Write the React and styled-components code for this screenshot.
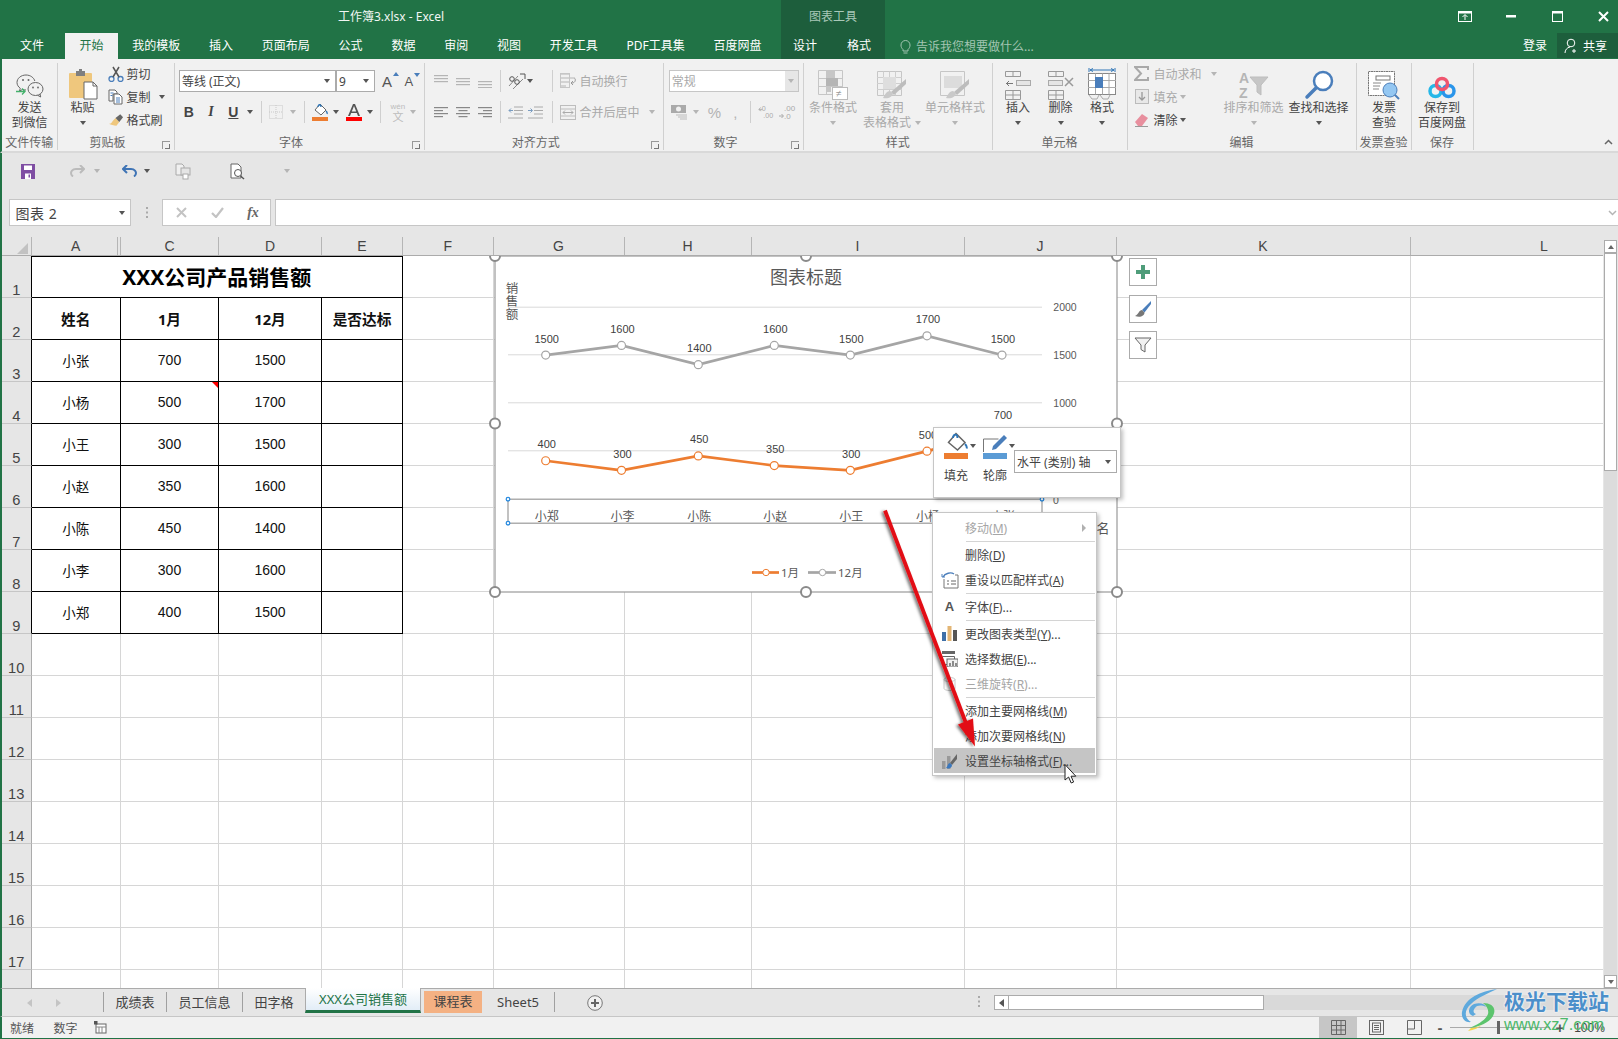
import React from 'react';
import styled, { createGlobalStyle } from 'styled-components';

const Global = createGlobalStyle`
  html, body { margin: 0; padding: 0; background: #fff; }
  body { font-family: "Noto Sans", "Noto Sans CJK SC", sans-serif; font-size: 12px; color: #444; }
  * { box-sizing: border-box; }
`;

const Win = styled.div`position: relative; width: 1618px; height: 1039px; overflow: hidden; display: flex; flex-direction: column; background: #e6e6e6;`;
const TitleBar = styled.div`height: 33px; background: #217346; display: flex; align-items: center; color: #f1f6f3; position: relative; flex: none;`;
const TitleText = styled.div`margin-left: 338px; width: 443px; line-height: 33px; font-size: 12px;`;
const ToolsHead = styled.div`width: 104px; height: 33px; background: #1d5e3c; color: #a9c8b8; text-align: center; line-height: 33px;`;
const WinCtrls = styled.div`margin-left: auto; margin-right: -8px; display: flex; align-items: center; svg { display:block; }`;
const WinBtn = styled.div`width: ${p => p.$w}px; display: flex; justify-content: center;`;

const TabBar = styled.div`height: 26px; background: #217346; display: flex; align-items: stretch; padding-left: 6px; color: #fff; flex: none;`;
const Tab = styled.div`padding: 0 14.4px; line-height: 26px; white-space: nowrap; flex: none; ${p => p.$on ? 'background:#f1f1f1;color:#217346;' : ''}`;
const FileTab = styled(Tab)`padding: 0 21px 0 14px;`;
const ToolsTabs = styled.div`background: #1d5e3c; display: flex; width: 104px; padding-left: 12px; margin-left: 5px; flex: none;`;
const ToolTab = styled.div`width: 38px; line-height: 26px; flex: none; &:first-child { width: 54px; }`;
const Tell = styled.div`display: flex; align-items: center; margin-left: 15px; color: #a3c5b2; gap: 5px; white-space: nowrap;`;
const Login = styled.div`margin-left: auto; line-height: 26px; width: 34px; `;
const Share = styled.div`width: 61px; height: 25px; background: #1d5e3c; display: flex; align-items: center; gap: 5px; padding-left: 7px;`;

const Ribbon = styled.div`height: 94px; background: #f1f1f1; border-bottom: 2px solid #d9d9d9; display: flex; padding-top: 4px; border-left: 2px solid #217346; flex: none;`;
const Group = styled.div`width: ${p => p.$w}px; height: 87px; border-right: 1px solid #d0d0d0; display: flex; flex-direction: column; position: relative; flex: none;`;
const GroupBody = styled.div`height: 72px; display: flex; padding-left: ${p => p.$pl || 0}px; margin-bottom: 1.500px;`;
const GroupLabel = styled.div`height: 15px; line-height: 15px; text-align: center; color: #666; padding-right: ${p => p.$launch ? 16 : 0}px; white-space: nowrap;`;
const Launcher = styled.div`position: absolute; right: 4px; bottom: 1px; width: 8px; height: 8px; border-left: 1px solid #999; border-top: 1px solid #999;
  &::after { content: ''; position: absolute; right: 0; bottom: 0; width: 4px; height: 4px; border-right: 1px solid #777; border-bottom: 1px solid #777; }`;
const Large = styled.div`width: ${p => p.$w}px; display: flex; flex-direction: column; align-items: center; color: ${p => p.$off ? '#a9a9a9' : '#444'}; flex: none; margin-left: ${p => p.$ml || 0}px;`;
const LargeIcon = styled.div`height: 35px; margin-top: 2px; display: flex; align-items: flex-end; justify-content: center; flex: none;`;
const LargeLine = styled.div`height: 15px; line-height: 15px; white-space: nowrap; display: flex; align-items: center; gap: 4px; justify-content: center;`;
const Caret = styled.i`display: inline-block; width: 0; height: 0; border-left: 3.5px solid transparent; border-right: 3.5px solid transparent; border-top: 4px solid ${p => p.$off ? '#b5b5b5' : '#555'}; flex: none;`;
const Stack = styled.div`display: flex; flex-direction: column; margin-top: -1px; width: ${p => p.$w}px; flex: none;`;
const SmallRow = styled.div`height: 23px; display: flex; align-items: center; color: ${p => p.$off ? '#a9a9a9' : '#444'}; white-space: nowrap;`;
const Rows = styled.div`padding-top: 7px; display: flex; flex-direction: column; gap: 9px; flex: none;`;
const Row = styled.div`height: 22px; display: flex; align-items: center; color: ${p => p.$off ? '#a9a9a9' : '#444'}; white-space: nowrap;`;
const Slot = styled.div`width: ${p => p.$w}px; margin-left: ${p => p.$ml || 0}px; display: flex; align-items: center; justify-content: center; flex: none; svg { display: block; }`;
const Sep = styled.div`width: 8px; height: 22px; flex: none; display:flex; justify-content:center; &::after { content: ''; width: 1px; background: #cfcfcf; }`;
const Combo = styled.div`width: ${p => p.$w}px; height: 22px; background: #fff; border: 1px solid ${p => p.$off ? '#c6c6c6' : '#ababab'}; display: flex; align-items: center; padding-left: 2px; color: ${p => p.$off ? '#a9a9a9' : '#444'}; position: relative; flex: none; justify-content: space-between;`;
const ComboArrow = styled.div`width: ${p => p.$w || 15}px; align-self: stretch; display: flex; align-items: center; justify-content: center; background: ${p => p.$bg || 'transparent'};`;
const Bold = styled.b`font-family: "Liberation Sans", sans-serif; font-size: 14px; color: #444;`;
const Ital = styled.i`font-family: "Liberation Serif", serif; font-size: 14px; font-weight: 700; color: #444;`;
const Under = styled.span`font-family: "Liberation Sans", sans-serif; font-size: 14px; font-weight: 700; text-decoration: underline; color: #444;`;
const BigA = styled.span`font-family: "Liberation Sans", sans-serif; font-size: ${p => p.$s}px; color: #555; position: relative; line-height: 1;`;
const Tri = styled.i`position: absolute; right: -7px; top: -2px; border-left: 3px solid transparent; border-right: 3px solid transparent; ${p => p.$up ? 'border-bottom: 4px solid #4a7ebb;' : 'border-top: 4px solid #4a7ebb;'}`;
const Wen = styled.div`display: flex; flex-direction: column; align-items: center; line-height: 9px; color: #bcbcbc; font-size: 8px; font-family: "Liberation Sans", sans-serif; span { font-size: 11px; line-height: 11px; font-family: "Noto Sans CJK SC", sans-serif; }`;
const Pct = styled.span`font-family: "Liberation Sans", sans-serif; font-size: 15px; color: #b3b3b3;`;
const Collapse = styled.div`margin-left: auto; align-self: flex-end; padding: 0 5px 2px 0;`;

const Qat = styled.div`height: 46px; background: #e6e6e6; display: flex; align-items: center; padding-left: 16px; padding-bottom: 10px; border-left: 2px solid #217346; flex: none;`;
const FormulaRow = styled.div`height: 27px; display: flex; background: #e6e6e6; border-left: 2px solid #217346; padding-left: 6.5px; align-items: stretch; flex: none;`;
const NameBox = styled.div`width: 122.5px; background: #fff; border: 1px solid #c6c6c6; display: flex; align-items: center; justify-content: space-between; padding-left: 6px; font-size: 14px; color: #444; letter-spacing: .5px;`;
const Dots = styled.div`width: 31px; display: flex; justify-content: center; align-items: center;`;
const FxBox = styled.div`width: 109px; background: #fff; border: 1px solid #c6c6c6; display: flex; align-items: center;`;
const FormulaInput = styled.div`flex: 1; margin-left: 4px; background: #fff; border: 1px solid #c6c6c6; border-right: 0; display: flex; align-items: center; justify-content: flex-end; padding-right: 1px;`;
const Fx = styled.i`font-family: "Liberation Serif", serif; font-size: 14px; color: #666; font-weight: 700;`;
const Gap = styled.div`height: 11px; background: #e6e6e6; border-left: 2px solid #217346; flex: none;`;

const SheetWrap = styled.div`height: 751px; display: flex; border-left: 2px solid #217346; background: #e6e6e6; flex: none;`;
const SheetCol = styled.div`width: 1601px; display: flex; flex-direction: column; position: relative; overflow: hidden;`;
const COLS = '29.5px 89.5px 98px 103px 81px 90.5px 131px 127px 213px 152px 294px 268px';
const HeadRow = styled.div`height: 18.5px; display: grid; grid-template-columns: ${COLS}; background: #e6e6e6; border-bottom: 1px solid #ababab; flex: none;`;
const HeadCell = styled.div`text-align: center; font-family: "Liberation Sans", sans-serif; font-size: 14px; line-height: 18px; color: #444; border-right: 1px solid #b5b5b5; position: relative;
  ${p => p.$double ? `&::after { content: ''; position: absolute; right: 2px; top: 0; bottom: 0; width: 1px; background: #b5b5b5; }` : ''}`;
const Corner = styled.div`position: relative; border-right: 1px solid #b5b5b5; &::after { content: ''; position: absolute; right: 3px; bottom: 1px; width: 0; height: 0; border-left: 11px solid transparent; border-bottom: 11px solid #c2c2c2; }`;
const Body = styled.div`flex: 1; position: relative; overflow: hidden; background: #fff;`;
const Grid = styled.div`display: grid; grid-template-columns: ${COLS}; grid-auto-rows: 42px;`;
const RowNo = styled.div`background: #e6e6e6; border-right: 1px solid ${p => p.$dark ? '#000' : '#ababab'}; border-bottom: 1px solid #c6c6c6; font-family: "Liberation Sans", sans-serif; font-size: 14.67px; color: #444; display: flex; align-items: flex-end; justify-content: center; line-height: 13px;`;
const Cell = styled.div`position: relative; border-right: 1px solid ${p => p.$box ? '#000' : '#d6d6d6'}; border-bottom: 1px solid ${p => p.$box ? '#000' : '#d6d6d6'}; display: flex; align-items: center; justify-content: center; color: #111; font-size: ${p => p.$bold ? '14.67px' : '13.5px'}; font-weight: ${p => p.$bold ? 700 : 400}; font-family: ${p => p.$num ? '"Liberation Sans",' : ''} "Noto Sans", "Noto Sans CJK SC", sans-serif; white-space: nowrap;
  ${p => p.$num ? 'font-size: 14px;' : ''}
  ${p => p.$note ? `&::after { content: ''; position: absolute; right: 0; top: 0; border-top: 6px solid #f00; border-left: 6px solid transparent; }` : ''}`;
const TitleCell = styled(Cell)`grid-column: span 4; font-size: 21px; font-weight: 700; color: #000; box-shadow: inset 0 1px 0 #000;`;

const ChartSvg = styled.svg`position: absolute; left: 483px; top: -10px; font-family: "Noto Sans", "Noto Sans CJK SC", sans-serif;`;
const ChartBtns = styled.div`position: absolute; left: 1127px; top: 2.500px; display: flex; flex-direction: column; gap: 8.500px;`;
const ChartBtn = styled.div`width: 28px; height: 28px; background: #fff; border: 1px solid #ababab; display: flex; align-items: center; justify-content: center;`;

const Mini = styled.div`position: absolute; left: 931px; top: 171.5px; width: 188px; height: 71px; background: #fff; border: 1px solid #c6c6c6; box-shadow: 2px 2px 4px rgba(0,0,0,.25); display: flex; padding: 4px 0 0 10px; z-index: 3;`;
const MiniTool = styled.div`width: ${p => p.$w}px; display: flex; flex-direction: column; flex: none; `;
const MiniHead = styled.div`display: flex; align-items: flex-start; i { margin-top: 12px; margin-left: 2px; }`;
const MiniLabel = styled.div`margin-top: 7px; width: 24px; text-align: center; white-space: nowrap; color: #444;`;
const MiniCombo = styled.div`margin-top: 18px; width: 103px; height: 23px; margin-left: -1px; border: 1px solid #ababab; display: flex; align-items: center; justify-content: space-between; padding: 0 5px 0 2px; color: #444; white-space: nowrap;`;

const Menu = styled.div`position: absolute; left: 930px; top: 256.5px; width: 165px; background: #fff; border: 1px solid #c6c6c6; box-shadow: 2px 2px 4px rgba(0,0,0,.25); padding: 2px 1px; z-index: 3;`;
const MenuRow = styled.div`height: 25px; display: flex; align-items: center; color: ${p => p.$off ? '#a6a6a6' : '#444'}; background: ${p => p.$hot ? '#c5c5c5' : 'transparent'}; white-space: nowrap; position: relative;`;
const MenuIcon = styled.div`width: 31px; flex: none; display: flex; justify-content: center; align-items: center; svg { display: block; } b { font-size: 13px; color: #555; font-family: "Liberation Sans", sans-serif; }`;
const MenuSep = styled.div`height: 2px; margin-left: 32px; display: flex; align-items: center; &::after { content: ''; height: 1px; flex: 1; background: #d4d4d4; }`;
const Sub = styled.i`position: absolute; right: 9px; top: 9px; border-left: 4px solid #b0b0b0; border-top: 4px solid transparent; border-bottom: 4px solid transparent;`;
const OverSvg = styled.svg`position: absolute; left: 0; top: 0; z-index: 4; pointer-events: none;`;

const VScroll = styled.div`width: 15px; background: #e6e6e6; display: flex; flex-direction: column; padding-top: 3px; flex: none; align-items: center;`;
const VBtn = styled.div`width: 13px; height: 13px; background: #fff; border: 1px solid #ababab; display: flex; align-items: center; justify-content: center; flex: none;`;
const VThumb = styled.div`width: 13px; height: 218px; background: #fff; border: 1px solid #ababab; flex: none;`;
const VTrack = styled.div`flex: 1; width: 13px; background: #dcdcdc;`;
const Up = styled.i`border-left: 3.5px solid transparent; border-right: 3.5px solid transparent; border-bottom: 4px solid #666;`;
const Down = styled.i`border-left: 3.5px solid transparent; border-right: 3.5px solid transparent; border-top: 4px solid #666;`;

const TabsRow = styled.div`height: 28px; display: flex; align-items: stretch; border-top: 1px solid #ababab; border-left: 2px solid #217346; background: #e6e6e6; position: relative; flex: none;`;
const SheetTab = styled.div`height: 20px; align-self: flex-start; line-height: 20px; padding: 0 ${p => p.$pad || 11.5}px; border-right: ${p => p.$plain ? 0 : '1px solid #a0a0a0'}; font-size: 13px; color: #444; white-space: nowrap; margin-top: 3px;`;
const ActiveTab = styled.div`margin-top: -1px; height: 25px; width: 116px; text-align: center; line-height: 23px; font-size: 13px; color: #217346; background: linear-gradient(#fff, #e2edf7); border-left: 1px solid #ababab; border-right: 1px solid #ababab; border-bottom: 3px solid #217346; white-space: nowrap; flex: none;`;
const ColorTab = styled.div`margin: 2px 0 0 3px; width: 58px; height: 22px; background: #f4b183; text-align: center; line-height: 21px; font-size: 13px; color: #444; flex: none;`;
const TabArrow = styled.i`align-self: center; margin-left: ${p => p.$ml}px; border-top: 4px solid transparent; border-bottom: 4px solid transparent; ${p => p.$l ? 'border-right: 5px solid #c4c4c4;' : 'border-left: 5px solid #c4c4c4;'}`;
const TabList = styled.div`display: flex; margin-left: ${p => p.$ml}px; border-left: 1px solid #a0a0a0; height: 20px; margin-top: 3px; align-items: flex-start; > * { margin-top: 0; }`;
const PlusSlot = styled(Slot)`align-self: center;`;
const TabDots = styled.div`align-self: center; margin-left: auto; padding-right: 14px;`;
const HScrollBox = styled.div`margin-right: 20px; margin-top: 6px; width: 604px; height: 15px; background: #d9d9d9; display: flex;`;
const HBtn = styled.div`width: 15px; background: #fff; border: 1px solid #ababab; display: flex; align-items: center; justify-content: center;`;
const HThumb = styled.div`width: 255px; background: #fff; border: 1px solid #ababab; border-left: 0;`;

const Status = styled.div`height: 23px; background: #f1f1f1; border-top: 1px solid #c6c6c6; border-left: 2px solid #217346; border-bottom: 1px solid #217346; display: flex; align-items: center; padding-left: 8px; flex: none; color: #555;`;
const StatusText = styled.div`margin-left: ${p => p.$ml || 0}px;`;
const ViewBtn = styled.div`width: 38px; align-self: stretch; display: flex; align-items: center; justify-content: center; background: ${p => p.$on ? '#c6c6c6' : 'transparent'};`;
const StatusRight = styled.div`margin-left: auto; display: flex; align-items: center; align-self: stretch; padding-right: 6px;`;
const Zoomer = styled.div`width: 100px; height: 1px; background: #aaa; margin: 0 3px; position: relative; &::after { content: ''; position: absolute; left: 47px; top: -6px; width: 3px; height: 13px; background: #666; }`;
const ZoomSign = styled.div`width: 14px; text-align: center; color: #555; font-size: 15px; font-weight: 700; font-family: "Liberation Sans", sans-serif;`;
const Pctl = styled.div`width: 45px; text-align: center; font-size: 12px; font-family: "Liberation Sans", sans-serif; color: #444;`;

const Mark = styled.div`position: absolute; left: 1459px; top: 988px; width: 155px; height: 44px; display: flex; pointer-events: none;`;
const MarkText = styled.div`margin-left: 1px; display: flex; flex-direction: column;`;
const MarkName = styled.div`font-size: 21px; line-height: 26px; font-weight: 700; color: #4c8fca; text-shadow: 0 0 2px #fff, 0 0 2px #fff; white-space: nowrap;`;
const MarkUrl = styled.div`font-family: "Liberation Sans", sans-serif; font-size: 16.4px; line-height: 17px; color: #4cb86a; margin-top: 2px; white-space: nowrap;`;

const S = ({ w, h, v, children }) => <svg width={w} height={h} viewBox={v || `0 0 ${w} ${h}`} fill="none">{children}</svg>;

const Lines = ({ rows, c = '#888' }) => (
  <S w={16} h={14}>{rows.map(([x, y, l], i) => <rect key={i} x={x} y={y} width={l} height={1.2} fill={c} />)}</S>
);

const Wechat = () => (
  <S w={28} h={26}>
    <path d="M10 1C5 1 1 4.300 1 8.500c0 2.400 1.300 4.400 3.300 5.800L3.500 17l3-1.500c1 .3 2.200 .5 3.500 .5" stroke="#666" />
    <path d="M10 1c4.500 0 8 2.800 8.800 6" stroke="#666" />
    <ellipse cx="19.500" cy="15" rx="7.500" ry="6.500" fill="#f1f1f1" stroke="#666" />
    <path d="M24 20l.7 3-3-1.700" stroke="#666" />
    <circle cx="7" cy="6" r="1" fill="#666" /><circle cx="12.500" cy="6" r="1" fill="#666" /><circle cx="17" cy="13.500" r=".9" fill="#666" /><circle cx="22" cy="13.500" r=".9" fill="#666" />
    <path d="M0 17.500h9M6 14.500l3 3-3 3" stroke="#43b16b" strokeWidth="1.300" />
  </S>
);
const Paste = () => (
  <S w={30} h={31}>
    <rect x="1" y="4" width="23" height="25" rx="1" fill="#efc77d" />
    <rect x="8" y="2" width="9" height="5" fill="#7f7f7f" /><rect x="11" y="0" width="3" height="4" fill="#7f7f7f" />
    <path d="M16 13h9l4 4v13H16z" fill="#fff" stroke="#666" />
    <path d="M25 13v4h4" stroke="#666" />
  </S>
);
const Scissors = () => (
  <S w={16} h={16}>
    <circle cx="3.500" cy="13" r="2.500" stroke="#4a7ebb" strokeWidth="1.300" /><circle cx="12.500" cy="13" r="2.500" stroke="#4a7ebb" strokeWidth="1.300" />
    <path d="M5 11L11 1M11 11L5 1" stroke="#555" strokeWidth="1.500" />
  </S>
);
const Copy = () => (
  <S w={16} h={16}>
    <path d="M1 1h6l2 2v2H5v7H1z" fill="#fff" stroke="#666" /><path d="M6 5h5l3 3v7H6z" fill="#fff" stroke="#666" />
    <path d="M2.500 4h3M2.500 6.500h2M8 9h4M8 11h4M8 13h4" stroke="#4a7ebb" />
  </S>
);
const Painter = () => (
  <S w={17} h={14}>
    <path d="M8 5l4 4-3 4c-3 0-6-1-8-2 2 0 3-1 4-3z" fill="#efc77d" />
    <path d="M8 5l4 4 4-5-3-3z" fill="#666" />
  </S>
);
const Border = () => (
  <S w={14} h={14}><rect x=".5" y=".5" width="13" height="13" stroke="#c9c9c9" strokeDasharray="1 1" /><path d="M7 0v14M0 7h14" stroke="#c9c9c9" strokeDasharray="1 1" /></S>
);
const Bucket = ({ w = 16, h = 18 }) => (
  <S w={w} h={h} v="0 0 16 18">
    <path d="M8 1l6 6-5 5-6-5z" fill="#fff" stroke="#666" />
    <path d="M6 4c0-3 3-3 3 0M14 8c1 1 1.500 2 1 3" stroke="#2e75b6" strokeWidth="1.300" />
    <rect x="0" y="14" width="16" height="4" fill="#ed7d31" />
  </S>
);
const FontA = () => (
  <S w={16} h={18}><path d="M2 13L7 1h2l5 12h-2l-1.200-3H5.200L4 13zM5.800 8.500h4.400L8 3z" fill="#555" /><rect y="14" width="16" height="4" fill="#f00" /></S>
);
const Orient = () => (
  <S w={20} h={17}><path d="M3 13L12 3M7 16L17 6" stroke="#888" /><path d="M14 1h5v5" stroke="#555" /><circle cx="6" cy="6" r="2.300" stroke="#555" /><circle cx="11" cy="9" r="2.300" stroke="#555" /></S>
);
const Indent = ({ r }) => (
  <S w={16} h={13}><path d="M6 1h9M6 4.500h9M6 8h9M0 12h15" stroke="#aaa" /><path d={r ? 'M0 4.500h4M2.500 2.500l2 2-2 2' : 'M5 4.500H1M3 2.500l-2 2 2 2'} stroke="#7a9cc0" /></S>
);
const Wrap = () => (
  <S w={16} h={16}><path d="M1 1h9M1 5h13M1 9h8M1 13h5" stroke="#b5b5b5" strokeWidth="1.200" /><path d="M14 5c2 0 2 5-2 5M13 8l-2 2 2 2" stroke="#999" /><rect x="0.500" y="0.500" width="9" height="14" stroke="#c6c6c6" /></S>
);
const Merge = () => (
  <S w={16} h={15}><rect x=".5" y=".5" width="15" height="14" stroke="#bdbdbd" /><path d="M0 4h16M0 11h16" stroke="#bdbdbd" /><path d="M3 7.500h10M5 5.500l-2 2 2 2M11 5.500l2 2-2 2" stroke="#aaa" /></S>
);
const Currency = () => (
  <S w={16} h={16}><rect x="0" y="1" width="15" height="8" fill="#aaa" /><circle cx="7.500" cy="5" r="2.500" fill="#f1f1f1" /><path d="M5 11h11M7 13h9M9 15h7" stroke="#bbb" /></S>
);
const Dec = ({ t, b, a }) => (
  <S w={18} h={17}>
    <text x={a ? 6 : 2} y="7" fontSize="8" fill="#aaa" fontFamily="Liberation Sans">{t}</text>
    <text x="6" y="15" fontSize="8" fill="#aaa" fontFamily="Liberation Sans">{b}</text>
    <path d={a ? 'M1 12h4M3.500 10l2 2-2 2' : 'M5 5H1M3 3L1 5l2 2'} stroke="#aaa" />
  </S>
);
const CondFmt = () => (
  <S w={30} h={30}>
    <path d="M.500.500h24v24H.500zM8.500 0v25M16.500 0v25M0 8.500h25M0 16.500h25" stroke="#c6c6c6" />
    <rect x="8" y="1" width="8" height="8" fill="#c6c6c6" /><rect x="8" y="8" width="12" height="8" fill="#b5b5b5" /><rect x="8" y="16" width="5" height="6" fill="#c6c6c6" />
    <rect x="14.500" y="17.500" width="15" height="12" fill="#fff" stroke="#bbb" />
    <text x="18" y="27" fontSize="10" fill="#999" fontFamily="Liberation Sans">≠</text>
  </S>
);
const TableFmt = ({ cell }) => (
  <S w={30} h={30}>
    <path d="M.500 1.500h24v24H.500z" stroke="#c6c6c6" fill={cell ? '#f1f1f1' : 'none'} />
    {cell ? <rect x="4" y="6" width="18" height="12" fill="#dcdcdc" /> : <path d="M6.500 1.500v24M12.500 1.500v24M18.500 1.500v24M0 7.500h25M0 13.500h25M0 19.500h25" stroke="#cfcfcf" />}
    {!cell && <rect x="6" y="7" width="13" height="12" fill="#dedede" />}
    <path d="M29 9L14 22l3 3L29 14z" fill="#bdbdbd" /><path d="M13 21c-4 0-5 4-7 7 5 1 10-1 10-5z" fill="#c9c9c9" />
  </S>
);
const CellsIcon = ({ mode }) => (
  <S w={28} h={30}>
    <path d="M1.500 1.500h15v5h-15zM9 1.500v5" stroke="#999" />
    <path d="M1.500 20.500h15v9h-15zM1.500 25h15M9 20.500v9" stroke="#999" />
    {mode === 'ins'
      ? <><path d="M2 13.500h7M5 11l-2.500 2.500L5 16" stroke="#777" /><rect x="12.500" y="10.500" width="14" height="5" fill="#e5e5e5" stroke="#aaa" /></>
      : <><rect x="1.500" y="10.500" width="14" height="5" fill="#e5e5e5" stroke="#aaa" /><path d="M18 8l8 8M26 8l-8 8" stroke="#999" strokeWidth="1.500" /></>}
  </S>
);
const FormatCells = () => (
  <S w={28} h={33}>
    <path d="M1 1v4M27 1v4M2 3h24" stroke="#2e75b6" />
    <path d="M5 1.500l-3 1.500 3 1.500M23 1.500l3 1.500-3 1.500" stroke="#2e75b6" />
    <rect x=".5" y="6.500" width="27" height="21" fill="#fff" stroke="#888" />
    <path d="M7.500 6.500v21M14.500 6.500v21M21 6.500v21M0 13.500h28M0 20.500h28" stroke="#aaa" />
    <rect x="7" y="10" width="8" height="11" fill="#4a7ebb" />
    <path d="M1 28l3 4h5l2-4M12 28l3 4h5l2-4" stroke="#aaa" />
  </S>
);
const Sigma = () => <S w={15} h={15}><path d="M14 4V1H1l6 6.500L1 14h13v-3" stroke="#a9a9a9" strokeWidth="2" /></S>;
const FillDown = () => <S w={14} h={15}><rect x=".5" y=".5" width="13" height="14" fill="#e8e8e8" stroke="#bbb" /><path d="M7 3v8M4 8l3 3 3-3" stroke="#999" strokeWidth="1.300" /></S>;
const Eraser = () => <S w={15} h={14}><path d="M1 9l7-8 6 4-6 8H4z" fill="#e88f9e" /><path d="M1 13.500h13" stroke="#999" /></S>;
const Sort = () => (
  <S w={30} h={30}>
    <text x="0" y="13" fontSize="14" fill="#b5b5b5" fontFamily="Liberation Sans" fontWeight="700">A</text>
    <text x="0" y="28" fontSize="14" fill="#b5b5b5" fontFamily="Liberation Sans" fontWeight="700">Z</text>
    <path d="M11 7h18l-7 8v10l-4-3v-7z" fill="#c6c6c6" stroke="#bdbdbd" />
  </S>
);
const Search = () => (
  <S w={30} h={30}><circle cx="19" cy="11" r="9" fill="#fff" stroke="#4a7ebb" strokeWidth="2.500" /><path d="M12 18L3 27" stroke="#4a7ebb" strokeWidth="3.500" strokeLinecap="round" /></S>
);
const Invoice = () => (
  <S w={32} h={29}>
    <rect x=".5" y=".5" width="26" height="24" fill="#fff" stroke="#777" strokeDasharray="2 .5" />
    <rect x="8" y="5" width="14" height="4" stroke="#777" /><path d="M5 12h8M5 15h7M5 18h6" stroke="#888" />
    <circle cx="22" cy="19" r="7" fill="#94c7f2" stroke="#4a7ebb" /><path d="M27 24l4 4" stroke="#4a7ebb" strokeWidth="2" />
  </S>
);
const BaiduLogo = () => (
  <S w={28} h={24}>
    <circle cx="7.500" cy="15" r="5.500" stroke="#25b7e8" strokeWidth="3.500" />
    <circle cx="20.500" cy="15" r="5.500" stroke="#2a95ea" strokeWidth="3.500" />
    <circle cx="14" cy="8" r="5.500" stroke="#f0566f" strokeWidth="3.500" />
  </S>
);
const Save = () => <S w={14} h={15}><path d="M0 0h14v15H0z" fill="#7f4ea3" /><rect x="3" y="1.500" width="8" height="4.500" fill="#fff" /><rect x="4" y="9.500" width="6" height="5.500" fill="#fff" /><rect x="7.500" y="10.500" width="1.500" height="3" fill="#7f4ea3" /></S>;
const Redo = () => <S w={15} h={12}><path d="M13 4H6C2 4 1 7 1 8c0 1 .5 2.500 2 3.500" stroke="#bbb" strokeWidth="2" /><path d="M10 0l4 4-4 4" stroke="#bbb" strokeWidth="2" /></S>;
const Undo = () => <S w={15} h={12}><path d="M2 4h7c4 0 5 3 5 4 0 1-.5 2.500-2 3.500" stroke="#3f74b5" strokeWidth="2" /><path d="M5 0L1 4l4 4" stroke="#3f74b5" strokeWidth="2" /></S>;
const PrintP = () => <S w={16} h={17}><path d="M1 1h6l2 2v9H1z" stroke="#aaa" fill="#f0f0f0" /><rect x="6" y="5" width="9" height="7" fill="#e5e5e5" stroke="#aaa" /><rect x="8" y="11" width="5" height="5" fill="#fff" stroke="#aaa" /></S>;
const DocSearch = () => <S w={15} h={17}><path d="M1 1h7l3 3v11H1z" fill="#fff" stroke="#666" /><circle cx="8" cy="10" r="3.500" fill="#fff" stroke="#555" /><path d="M10.500 13l3.500 3" stroke="#555" strokeWidth="1.500" /></S>;

const Cross = ({ c }) => <S w={11} h={11}><path d="M1 1l9 9M10 1l-9 9" stroke={c} strokeWidth="2" /></S>;
const Check = () => <S w={13} h={11}><path d="M1 6l4 4 7-9" stroke="#c3c3c3" strokeWidth="2.200" /></S>;

const G_PTS = [1500, 1600, 1400, 1600, 1500, 1700, 1500];
const O_PTS = [400, 300, 450, 350, 300, 500, 700];
const NAMES = ['小郑', '小李', '小陈', '小赵', '小王', '小杨', '小张'];
const XS = [545.7, 621.5, 698.3, 774.3, 850.3, 927, 1002];
const yOf = v => 498.7 - v * 0.0961;
const GRIDS = [[2000, 306.7], [1500, 354.3], [1000, 402.3], [500, 450.3]];

const Handle = ({ x, y }) => <circle cx={x} cy={y} r="5" fill="#fff" stroke="#8a8a8a" strokeWidth="2" />;
const Blue = ({ x, y }) => <circle cx={x} cy={y} r="1.800" fill="#fff" stroke="#2e8de0" strokeWidth="1.300" />;

const Chart = () => (
  <ChartSvg width="646" height="356" viewBox="485 245.500 646 356">
    <rect x="495" y="255.500" width="622" height="336" fill="#fff" stroke="#9a9a9a" strokeWidth="1.200" />
    <text x="806" y="283" textAnchor="middle" fontSize="18" fill="#595959">图表标题</text>
    {['销', '售', '额'].map((t, i) => <text key={t} x="512" y={292 + i * 13.300} textAnchor="middle" fontSize="12.500" fill="#595959">{t}</text>)}
    {GRIDS.map(([v, y]) => (
      <g key={v}>
        <line x1="508" x2="1042" y1={y} y2={y} stroke="#d9d9d9" />
        <text x="1065" y={y + 4} textAnchor="middle" fontSize="10.500" fill="#595959" fontFamily="Liberation Sans">{v}</text>
      </g>
    ))}
    <text x="1056" y="503" textAnchor="middle" fontSize="10.500" fill="#595959" fontFamily="Liberation Sans">0</text>
    <polyline points={G_PTS.map((v, i) => `${XS[i]},${yOf(v)}`).join(' ')} fill="none" stroke="#a5a5a5" strokeWidth="2.700" />
    <polyline points={O_PTS.map((v, i) => `${XS[i]},${yOf(v)}`).join(' ')} fill="none" stroke="#ed7d31" strokeWidth="2.700" />
    {G_PTS.map((v, i) => (
      <g key={i}>
        <circle cx={XS[i]} cy={yOf(v)} r="4" fill="#fff" stroke="#a5a5a5" strokeWidth="1.200" />
        <text x={XS[i] + 1} y={yOf(v) - 12.500} textAnchor="middle" fontSize="11" fill="#404040" fontFamily="Liberation Sans">{v}</text>
      </g>
    ))}
    {O_PTS.map((v, i) => (
      <g key={i}>
        <circle cx={XS[i]} cy={yOf(v)} r="4" fill="#fff" stroke="#ed7d31" strokeWidth="1.200" />
        <text x={XS[i] + 1} y={yOf(v) - 12.500} textAnchor="middle" fontSize="11" fill="#404040" fontFamily="Liberation Sans">{v}</text>
      </g>
    ))}
    <rect x="508" y="498.700" width="534" height="24" fill="none" stroke="#9a9a9a" strokeWidth="1.200" />
    <Blue x={508} y={498.7} /><Blue x={508} y={522.7} /><Blue x={1042} y={498.7} /><Blue x={1042} y={522.7} />
    {NAMES.map((n, i) => <text key={n} x={XS[i] + 1} y="520" textAnchor="middle" fontSize="12" fill="#595959">{n}</text>)}
    <text x="1103" y="532" textAnchor="middle" fontSize="13" fill="#595959">名</text>
    <line x1="752" x2="779" y1="572" y2="572" stroke="#ed7d31" strokeWidth="2.700" /><circle cx="766" cy="572" r="3.200" fill="#fff" stroke="#ed7d31" />
    <text x="781" y="576.500" fontSize="11.500" fill="#595959">1月</text>
    <line x1="808" x2="836" y1="572" y2="572" stroke="#a5a5a5" strokeWidth="2.700" /><circle cx="822.500" cy="572" r="3.200" fill="#fff" stroke="#a5a5a5" />
    <text x="838" y="576.500" fontSize="11.500" fill="#595959">12月</text>
    <Handle x={495} y={255.5} /><Handle x={806} y={255.5} /><Handle x={1117} y={255.5} />
    <Handle x={495} y={423} /><Handle x={1117} y={423} />
    <Handle x={495} y={591.5} /><Handle x={806} y={591.5} /><Handle x={1117} y={591.5} />
  </ChartSvg>
);

const Overlay = () => (
  <OverSvg width="1100" height="540" viewBox="2 255.500 1100 540">
    <defs><filter id="shadow" x="-30%" y="-5%" width="160%" height="110%"><feDropShadow dx="-2" dy="1" stdDeviation="1.500" floodColor="#000" floodOpacity=".55" /></filter></defs>
    <g filter="url(#shadow)">
      <line x1="885" y1="510" x2="968" y2="728" stroke="#e20f13" strokeWidth="3.800" />
      <polygon points="958,724 973,718 975,746" fill="#e20f13" />
    </g>
    <path d="M1065 764v15.500l3.600-3 2.600 6 2.400-1-2.600-5.800h4.800z" fill="#fff" stroke="#222" />
  </OverSvg>
);

const mnemonic = (a, k, b) => <span>{a}(<u>{k}</u>){b}</span>;

const ContextMenu = () => (
  <Menu>
    <MenuRow $off><MenuIcon />{mnemonic('移动', 'M')}<Sub /></MenuRow>
    <MenuSep />
    <MenuRow><MenuIcon />{mnemonic('删除', 'D')}</MenuRow>
    <MenuRow><MenuIcon><S w={18} h={18}><path d="M4 6H1V3" stroke="#4a7ebb" /><path d="M2 6c2-4 8-5 11-3" stroke="#4a7ebb" strokeWidth="1.300" /><path d="M3 8v9h14V4h-3" stroke="#777" fill="#fff" /><path d="M6 10h2M10 10h5M6 13h2M10 13h5" stroke="#666" /></S></MenuIcon>{mnemonic('重设以匹配样式', 'A')}</MenuRow>
    <MenuSep />
    <MenuRow><MenuIcon><b>A</b></MenuIcon>{mnemonic('字体', 'F', '...')}</MenuRow>
    <MenuSep />
    <MenuRow><MenuIcon><S w={15} h={15}><rect x="0" y="6" width="4" height="9" fill="#3f6fa7" /><rect x="5.500" y="0" width="4" height="15" fill="#e3b574" /><rect x="11" y="4" width="4" height="11" fill="#555" /></S></MenuIcon>{mnemonic('更改图表类型', 'Y', '...')}</MenuRow>
    <MenuRow><MenuIcon><S w={16} h={16}><path d="M.5 5.500h12v8H.5z" stroke="#666" /><rect x="0" y="0" width="13" height="3" fill="#666" /><rect x="5" y="8" width="11" height="8" fill="#f1f1f1" stroke="#666" /><path d="M8 15v-3M11 15v-5M14 15v-3" stroke="#555" strokeWidth="1.300" /></S></MenuIcon>{mnemonic('选择数据', 'E', '...')}</MenuRow>
    <MenuRow $off><MenuIcon><S w={13} h={14}><ellipse cx="6.500" cy="2.500" rx="5.500" ry="2" stroke="#c8c8c8" /><path d="M1 2.500v9c0 1 2.500 2 5.500 2s5.500-1 5.500-2v-9" stroke="#c8c8c8" /></S></MenuIcon>{mnemonic('三维旋转', 'R', '...')}</MenuRow>
    <MenuSep />
    <MenuRow><MenuIcon />{mnemonic('添加主要网格线', 'M')}</MenuRow>
    <MenuRow><MenuIcon />{mnemonic('添加次要网格线', 'N')}</MenuRow>
    <MenuRow $hot><MenuIcon><S w={16} h={16}><rect x="0" y="8" width="3.500" height="8" fill="#999" /><rect x="5" y="3" width="3.500" height="13" fill="#999" /><path d="M15 1L8 10l2 2 5-6z" fill="#666" /><path d="M8 10c-2 0-2 3-4 5 3 1 6 0 6-3z" fill="#3a77bd" /></S></MenuIcon>{mnemonic('设置坐标轴格式', 'F', '...')}</MenuRow>
  </Menu>
);

const MiniBar = () => (
  <Mini>
    <MiniTool $w={39}>
      <MiniHead><Bucket w={24} h={27} /><Caret /></MiniHead>
      <MiniLabel>填充</MiniLabel>
    </MiniTool>
    <MiniTool $w={32}>
      <MiniHead>
        <S w={24} h={27}><path d="M.5 20V7h15" stroke="#777" /><path d="M21 3l3 3-11 11-4 1 1-4z" fill="#4a7ebb" /><rect x="0" y="21" width="24" height="6" fill="#5b9bd5" /></S>
        <Caret />
      </MiniHead>
      <MiniLabel>轮廓</MiniLabel>
    </MiniTool>
    <MiniCombo>水平 (类别) 轴<Caret /></MiniCombo>
  </Mini>
);

const TABLE = [
  ['小张', 700, 1500], ['小杨', 500, 1700], ['小王', 300, 1500], ['小赵', 350, 1600],
  ['小陈', 450, 1400], ['小李', 300, 1600], ['小郑', 400, 1500],
];
const rowList = Array.from({ length: 18 }, (_, i) => i + 1);
const blanks = ['F', 'G', 'H', 'I', 'J', 'K', 'L'];

const SheetGrid = () => (
  <Grid>
    {rowList.map(r => (
      <React.Fragment key={r}>
        <RowNo $dark={r <= 9}>{r < 18 ? r : ''}</RowNo>
        {r === 1 && <TitleCell $box>XXX公司产品销售额</TitleCell>}
        {r === 2 && ['姓名', '1月', '12月', '是否达标'].map(t => <Cell key={t} $box $bold>{t}</Cell>)}
        {r >= 3 && r <= 9 && (
          <>
            <Cell $box>{TABLE[r - 3][0]}</Cell>
            <Cell $box $num $note={r === 4}>{TABLE[r - 3][1]}</Cell>
            <Cell $box $num>{TABLE[r - 3][2]}</Cell>
            <Cell $box />
          </>
        )}
        {r > 9 && [0, 1, 2, 3].map(i => <Cell key={i} />)}
        {blanks.map(c => <Cell key={c} />)}
      </React.Fragment>
    ))}
  </Grid>
);

const MAIN_TABS = ['我的模板', '插入', '页面布局', '公式', '数据', '审阅', '视图', '开发工具', 'PDF工具集', '百度网盘'];

function TabArrowIn() {
  return <S w={5} h={8}><path d="M5 0v8L0 4z" fill="#555" /></S>;
}

export default function App() {
  return (
    <Win>
      <Global />
      <TitleBar>
        <TitleText>工作簿3.xlsx - Excel</TitleText>
        <ToolsHead>图表工具</ToolsHead>
        <WinCtrls>
          <WinBtn $w={46}><S w={14} h={11}><rect x=".5" y=".5" width="13" height="10" stroke="#fff" /><path d="M0 1.500h14" stroke="#fff" strokeWidth="2" /><path d="M7 9V4M4.500 6L7 3.500 9.500 6" stroke="#fff" /></S></WinBtn>
          <WinBtn $w={46}><S w={10} h={3}><rect width="10" height="2.500" fill="#fff" /></S></WinBtn>
          <WinBtn $w={46}><S w={11} h={11}><rect x=".5" y=".5" width="10" height="10" stroke="#fff" /><rect width="11" height="2.500" fill="#fff" /></S></WinBtn>
          <WinBtn $w={46}><S w={11} h={11}><path d="M1 1l9 9M10 1l-9 9" stroke="#fff" strokeWidth="2" /></S></WinBtn>
        </WinCtrls>
      </TitleBar>
      <TabBar>
        <FileTab>文件</FileTab>
        <Tab $on>开始</Tab>
        {MAIN_TABS.map(t => <Tab key={t}>{t}</Tab>)}
        <ToolsTabs><ToolTab>设计</ToolTab><ToolTab>格式</ToolTab></ToolsTabs>
        <Tell>
          <S w={11} h={15}><path d="M3 10.500C1.500 9 1 8 1 6a4.500 4.500 0 019 0c0 2-.5 3-2 4.500V12H3z" stroke="#a3c5b2" /><path d="M3.500 14h4" stroke="#a3c5b2" /></S>
          告诉我您想要做什么...
        </Tell>
        <Login>登录</Login>
        <Share>
          <S w={14} h={16}><circle cx="7" cy="5" r="3.800" stroke="#fff" /><path d="M1 15c0-3 2-5.500 5-6M10 11v4M8 13h4" stroke="#fff" /></S>
          共享
        </Share>
      </TabBar>

      <Ribbon>
        <Group $w={55.5}>
          <GroupBody>
            <Large $w={55}><LargeIcon><Wechat /></LargeIcon><LargeLine>发送</LargeLine><LargeLine>到微信</LargeLine></Large>
          </GroupBody>
          <GroupLabel>文件传输</GroupLabel>
        </Group>
        <Group $w={117}>
          <GroupBody>
            <Large $w={50}><LargeIcon><Paste /></LargeIcon><LargeLine>粘贴</LargeLine><LargeLine><Caret /></LargeLine></Large>
            <Stack $w={66}>
              <SmallRow><Slot $w={16}><Scissors /></Slot><Slot $w={3} />剪切</SmallRow>
              <SmallRow><Slot $w={16}><Copy /></Slot><Slot $w={3} />复制<Slot $w={7} $ml={8}><Caret /></Slot></SmallRow>
              <SmallRow><Slot $w={16}><Painter /></Slot><Slot $w={3} />格式刷</SmallRow>
            </Stack>
          </GroupBody>
          <GroupLabel $launch>剪贴板</GroupLabel>
          <Launcher />
        </Group>
        <Group $w={250}>
          <GroupBody $pl={4.4}>
            <Rows>
              <Row>
                <Combo $w={157}>等线 (正文)<ComboArrow><Caret /></ComboArrow></Combo>
                <Combo $w={39}>9<ComboArrow><Caret /></ComboArrow></Combo>
                <Slot $w={24}><BigA $s={15}>A<Tri $up /></BigA></Slot>
                <Slot $w={20}><BigA $s={13}>A<Tri /></BigA></Slot>
              </Row>
              <Row>
                <Slot $w={20}><Bold>B</Bold></Slot>
                <Slot $w={24}><Ital>I</Ital></Slot>
                <Slot $w={21}><Under>U</Under></Slot>
                <Slot $w={12}><Caret /></Slot>
                <Slot $w={12}><Sep /></Slot>
                <Slot $w={17}><Border /></Slot>
                <Slot $w={16}><Caret $off /></Slot>
                <Slot $w={8}><Sep /></Slot>
                <Slot $w={22}><Bucket /></Slot>
                <Slot $w={11}><Caret /></Slot>
                <Slot $w={24}><FontA /></Slot>
                <Slot $w={8}><Caret /></Slot>
                <Slot $w={14}><Sep /></Slot>
                <Slot $w={20}><Wen>wén<span>文</span></Wen></Slot>
                <Slot $w={10}><Caret $off /></Slot>
              </Row>
            </Rows>
          </GroupBody>
          <GroupLabel $launch>字体</GroupLabel>
          <Launcher />
        </Group>
        <Group $w={239.5}>
          <GroupBody $pl={5}>
            <Rows>
              <Row $off>
                <Slot $w={22}><Lines c="#b5b5b5" rows={[[1, 1, 14], [1, 4, 14], [1, 7, 14]]} /></Slot>
                <Slot $w={22}><Lines c="#b5b5b5" rows={[[1, 4, 14], [1, 7, 14], [1, 10, 14]]} /></Slot>
                <Slot $w={22}><Lines c="#b5b5b5" rows={[[1, 7, 14], [1, 10, 14], [1, 13, 14]]} /></Slot>
                <Slot $w={9}><Sep /></Slot>
                <Slot $w={22}><Orient /></Slot>
                <Slot $w={6}><Caret /></Slot>
                <Slot $w={16} />
                <Slot $w={8}><Sep /></Slot>
                <Slot $w={22}><Wrap /></Slot>
                <Slot $w={1} />自动换行
              </Row>
              <Row $off>
                <Slot $w={22}><Lines rows={[[1, 2, 14], [1, 5, 9], [1, 8, 14], [1, 11, 9]]} /></Slot>
                <Slot $w={22}><Lines rows={[[1, 2, 14], [3.5, 5, 9], [1, 8, 14], [3.5, 11, 9]]} /></Slot>
                <Slot $w={22}><Lines rows={[[1, 2, 14], [6, 5, 9], [1, 8, 14], [6, 11, 9]]} /></Slot>
                <Slot $w={9}><Sep /></Slot>
                <Slot $w={22}><Indent /></Slot>
                <Slot $w={19}><Indent r /></Slot>
                <Slot $w={3} />
                <Slot $w={8}><Sep /></Slot>
                <Slot $w={22}><Merge /></Slot>
                <Slot $w={1} />合并后居中
                <Slot $w={7} $ml={9}><Caret $off /></Slot>
              </Row>
            </Rows>
          </GroupBody>
          <GroupLabel $launch>对齐方式</GroupLabel>
          <Launcher />
        </Group>
        <Group $w={140}>
          <GroupBody $pl={4.8}>
            <Rows>
              <Row><Combo $off $w={130}>常规<ComboArrow $w={13} $bg="#e6e6e6"><Caret $off /></ComboArrow></Combo></Row>
              <Row>
                <Slot $w={21}><Currency /></Slot>
                <Slot $w={12}><Caret $off /></Slot>
                <Slot $w={25}><Pct>%</Pct></Slot>
                <Slot $w={17}><Pct>,</Pct></Slot>
                <Slot $w={14}><Sep /></Slot>
                <Slot $w={16}><Dec t=".0" b=".00" /></Slot>
                <Slot $w={26}><Dec t=".00" b=".0" a /></Slot>
              </Row>
            </Rows>
          </GroupBody>
          <GroupLabel $launch>数字</GroupLabel>
          <Launcher />
        </Group>
        <Group $w={188.5}>
          <GroupBody>
            <Large $off $w={58}><LargeIcon><CondFmt /></LargeIcon><LargeLine>条件格式</LargeLine><LargeLine><Caret $off /></LargeLine></Large>
            <Large $off $w={60}><LargeIcon><TableFmt /></LargeIcon><LargeLine>套用</LargeLine><LargeLine>表格格式<Caret $off /></LargeLine></Large>
            <Large $off $w={64} $ml={1}><LargeIcon><TableFmt cell /></LargeIcon><LargeLine>单元格样式</LargeLine><LargeLine><Caret $off /></LargeLine></Large>
          </GroupBody>
          <GroupLabel>样式</GroupLabel>
        </Group>
        <Group $w={135}>
          <GroupBody $pl={4.5}>
            <Large $w={42}><LargeIcon><CellsIcon mode="ins" /></LargeIcon><LargeLine>插入</LargeLine><LargeLine><Caret /></LargeLine></Large>
            <Large $w={43}><LargeIcon><CellsIcon mode="del" /></LargeIcon><LargeLine>删除</LargeLine><LargeLine><Caret /></LargeLine></Large>
            <Large $w={40}><LargeIcon><FormatCells /></LargeIcon><LargeLine>格式</LargeLine><LargeLine><Caret /></LargeLine></Large>
          </GroupBody>
          <GroupLabel>单元格</GroupLabel>
        </Group>
        <Group $w={229}>
          <GroupBody $pl={5}>
            <Stack $w={91}>
              <SmallRow $off><Slot $w={18}><Sigma /></Slot><Slot $w={3} />自动求和<Slot $w={7} $ml={9}><Caret $off /></Slot></SmallRow>
              <SmallRow $off><Slot $w={18}><FillDown /></Slot><Slot $w={3} />填充<Slot $w={7} $ml={2}><Caret $off /></Slot></SmallRow>
              <SmallRow><Slot $w={18}><Eraser /></Slot><Slot $w={3} />清除<Slot $w={7} $ml={2}><Caret /></Slot></SmallRow>
            </Stack>
            <Large $off $w={60}><LargeIcon><Sort /></LargeIcon><LargeLine>排序和筛选</LargeLine><LargeLine><Caret $off /></LargeLine></Large>
            <Large $w={60} $ml={5}><LargeIcon><Search /></LargeIcon><LargeLine>查找和选择</LargeLine><LargeLine><Caret /></LargeLine></Large>
          </GroupBody>
          <GroupLabel>编辑</GroupLabel>
        </Group>
        <Group $w={55}>
          <GroupBody>
            <Large $w={55}><LargeIcon><Invoice /></LargeIcon><LargeLine>发票</LargeLine><LargeLine>查验</LargeLine></Large>
          </GroupBody>
          <GroupLabel>发票查验</GroupLabel>
        </Group>
        <Group $w={62}>
          <GroupBody>
            <Large $w={61}><LargeIcon><BaiduLogo /></LargeIcon><LargeLine>保存到</LargeLine><LargeLine>百度网盘</LargeLine></Large>
          </GroupBody>
          <GroupLabel>保存</GroupLabel>
        </Group>
        <Collapse><S w={9} h={6}><path d="M1 5l3.500-3.500L8 5" stroke="#666" strokeWidth="1.500" /></S></Collapse>
      </Ribbon>

      <Qat>
        <Slot $w={20}><Save /></Slot>
        <Slot $w={20} $ml={29.5}><Redo /></Slot>
        <Slot $w={12} $ml={3}><Caret $off /></Slot>
        <Slot $w={20} $ml={16.5}><Undo /></Slot>
        <Slot $w={10} $ml={3}><Caret /></Slot>
        <Slot $w={20} $ml={20.5}><PrintP /></Slot>
        <Slot $w={20} $ml={35}><DocSearch /></Slot>
        <Slot $w={8} $ml={35}><Caret $off /></Slot>
      </Qat>

      <FormulaRow>
        <NameBox>图表 2<ComboArrow $w={17}><Caret /></ComboArrow></NameBox>
        <Dots><S w={2} h={11}><path d="M1 0v2M1 4.500v2M1 9v2" stroke="#aaa" strokeWidth="2" /></S></Dots>
        <FxBox>
          <Slot $w={36}><Cross c="#c3c3c3" /></Slot>
          <Slot $w={36}><Check /></Slot>
          <Slot $w={36}><Fx>fx</Fx></Slot>
        </FxBox>
        <FormulaInput><S w={9} h={6}><path d="M1 1l3.500 3.500L8 1" stroke="#b5b5b5" strokeWidth="1.500" /></S></FormulaInput>
      </FormulaRow>
      <Gap />

      <SheetWrap>
        <SheetCol>
          <HeadRow>
            <Corner />
            <HeadCell $double>A</HeadCell>
            {['C', 'D', 'E', 'F', 'G', 'H', 'I', 'J', 'K', 'L'].map(c => <HeadCell key={c}>{c}</HeadCell>)}
          </HeadRow>
          <Body>
            <SheetGrid />
            <Chart />
            <ChartBtns>
              <ChartBtn><S w={16} h={16}><path d="M8 1v14M1 8h14" stroke="#4f9d7a" strokeWidth="4" /></S></ChartBtn>
              <ChartBtn><S w={18} h={18}><path d="M17 1L8 10l2.500 2.500L17 4z" fill="#4a7ebb" /><path d="M8 10c-3 0-3 4-7 6 5 2 9.500 0 9.500-3.500z" fill="#777" /></S></ChartBtn>
              <ChartBtn><S w={18} h={18}><path d="M1 2h16l-6 7v7l-4-2.500V9z" fill="#f1f1f1" stroke="#666" /></S></ChartBtn>
            </ChartBtns>
            <MiniBar />
            <ContextMenu />
            <Overlay />
          </Body>
        </SheetCol>
        <VScroll>
          <VBtn><Up /></VBtn>
          <VThumb />
          <VTrack />
          <VBtn><Down /></VBtn>
        </VScroll>
      </SheetWrap>

      <TabsRow>
        <TabArrow $l $ml={25} />
        <TabArrow $ml={24} />
        <TabList $ml={42}>
          <SheetTab>成绩表</SheetTab>
          <SheetTab>员工信息</SheetTab>
          <SheetTab $plain>田字格</SheetTab>
        </TabList>
        <ActiveTab>XXX公司销售额</ActiveTab>
        <ColorTab>课程表</ColorTab>
        <SheetTab $pad={15}>Sheet5</SheetTab>
        <PlusSlot $w={16} $ml={32}><S w={16} h={16}><circle cx="8" cy="8" r="7.300" stroke="#777" fill="#f1f1f1" /><path d="M8 4v8M4 8h8" stroke="#666" strokeWidth="2" /></S></PlusSlot>
        <TabDots><S w={2} h={11}><path d="M1 0v2M1 4.500v2M1 9v2" stroke="#aaa" strokeWidth="2" /></S></TabDots>
        <HScrollBox>
          <HBtn><TabArrowIn /></HBtn>
          <HThumb />
        </HScrollBox>
      </TabsRow>

      <Status>
        <StatusText>就绪</StatusText>
        <StatusText $ml={19.5}>数字</StatusText>
        <Slot $w={13} $ml={16}><S w={13} h={13}><rect x="2" y="3" width="10" height="9" stroke="#666" fill="#fff" /><path d="M2 6h10M5 6v6M8 6v6" stroke="#888" /><rect x="0" y="0" width="3.500" height="3.500" fill="#555" /></S></Slot>
        <StatusRight>
          <ViewBtn $on><S w={15} h={15}><path d="M.5.500h14v14H.500zM5.500 0v15M10 0v15M0 5.500h15M0 10h15" stroke="#666" /></S></ViewBtn>
          <ViewBtn><S w={15} h={15}><rect x=".5" y=".5" width="14" height="14" stroke="#666" /><rect x="3.500" y="3" width="8" height="9" stroke="#666" /><path d="M5 5.500h5M5 7.500h5M5 9.500h5" stroke="#666" /></S></ViewBtn>
          <ViewBtn><S w={15} h={15}><path d="M.5.500h14v14H.500z" stroke="#666" /><path d="M7.500 0v9H1" stroke="#666" /></S></ViewBtn>
          <ZoomSign>-</ZoomSign>
          <Zoomer />
          <ZoomSign>+</ZoomSign>
          <Pctl>100%</Pctl>
        </StatusRight>
      </Status>

      <Mark>
        <S w={44} h={44}>
          <path d="M38 1C22 3 6 10 3 24c-1 6 3 11 9 10C5 30 5 22 12 16 19 9 30 5 38 1z" fill="#5ea9dd" />
          <path d="M14 28c-6-2-5-9 1-12 6-2 11 0 12 3-4-2-9-2-11 1-2 2-2 5 1 6z" fill="#5ea9dd" />
          <path d="M24 15c9 0 14 5 10 13-4 7-14 11-24 12 8-3 17-8 19-14 1-4-1-8-5-11z" fill="#5cc46d" />
          <path d="M12 40c4 0 8-1 11-3-3 3-8 5-14 6z" fill="#f5d64a" />
        </S>
        <MarkText>
          <MarkName>极光下载站</MarkName>
          <MarkUrl>www.xz7.com</MarkUrl>
        </MarkText>
      </Mark>
    </Win>
  );
}
